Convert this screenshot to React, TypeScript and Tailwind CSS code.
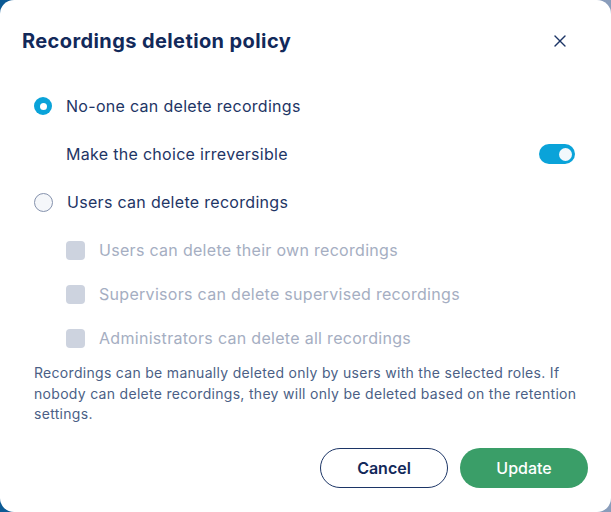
import { useState } from 'react';
import { X } from 'lucide-react';

const options = [
  'Users can delete their own recordings',
  'Supervisors can delete supervised recordings',
  'Administrators can delete all recordings',
];

export default function App() {
  const [mode, setMode] = useState<'none' | 'users'>('none');
  const [irreversible, setIrreversible] = useState(true);

  return (
    <div className="h-[512px] w-[611px] bg-gradient-to-r from-[#0b5a94] to-[#8a9dbb] font-['Inter',sans-serif]">
      <div className="flex h-full flex-col rounded-[14px] bg-white">
        <div className="flex items-center justify-between pl-[22px] pr-[41px] pt-[26px]">
          <h2 className="text-[20px] font-bold tracking-[0.4px] text-[#12295a]">Recordings deletion policy</h2>
          <button className="text-[#1c3566]">
            <X className="h-[20px] w-[20px]" strokeWidth={1.6} />
          </button>
        </div>

        <div className="mt-[38px] flex flex-col pl-[34px] pr-[24px] tracking-[0.3px]">
          <label className="flex h-[24px] items-center gap-[14px]" onClick={() => setMode('none')}>
            <span
              className={`flex h-[18px] w-[18px] items-center justify-center rounded-full ${
                mode === 'none' ? 'bg-[#0aa3d9]' : 'border border-[#8592ad] bg-[#f5f7fa]'
              }`}
            >
              {mode === 'none' && <span className="h-[7px] w-[7px] rounded-full bg-white" />}
            </span>
            <span className="text-[16px] text-[#1e3565]">No-one can delete recordings</span>
          </label>

          <div className="mt-[24px] flex h-[24px] items-center justify-between pl-[32px] pr-[12px]">
            <span className="text-[16px] text-[#1e3565]">Make the choice irreversible</span>
            <button
              onClick={() => setIrreversible(!irreversible)}
              className={`flex h-[20px] w-[36px] items-center rounded-full px-[3px] ${
                irreversible ? 'justify-end bg-[#0aa3d9]' : 'justify-start bg-[#c9d0dd]'
              }`}
            >
              <span className="h-[13px] w-[13px] rounded-full bg-[#f2f8fc]" />
            </button>
          </div>

          <label className="mt-[24px] flex h-[24px] items-center gap-[14px]" onClick={() => setMode('users')}>
            <span
              className={`flex h-[19px] w-[19px] items-center justify-center rounded-full ${
                mode === 'users' ? 'bg-[#0aa3d9]' : 'border border-[#8592ad] bg-[#f5f7fa]'
              }`}
            >
              {mode === 'users' && <span className="h-[7px] w-[7px] rounded-full bg-white" />}
            </span>
            <span className="text-[16px] text-[#1e3565]">Users can delete recordings</span>
          </label>

          <div className="mt-[24px] flex flex-col gap-[20px] pl-[32px]">
            {options.map((o) => (
              <div key={o} className="flex h-[24px] items-center gap-[14px]">
                <span className="h-[19px] w-[19px] rounded-[4px] bg-[#cdd3df]" />
                <span className="text-[16px] text-[#a5aec2]">{o}</span>
              </div>
            ))}
          </div>

          <p className="mt-[13px] text-[14px] leading-[20.5px] text-[#4b5f86]">
            Recordings can be manually deleted only by users with the selected roles. If nobody can delete
            recordings, they will only be deleted based on the retention settings.
          </p>
        </div>

        <div className="mt-auto mb-[24px] flex justify-end gap-[12px] pr-[23px]">
          <button className="h-[40px] w-[128px] rounded-full border border-[#1c3566] text-[16px] font-semibold text-[#12295a]">
            Cancel
          </button>
          <button className="h-[40px] w-[128px] rounded-full bg-[#3a9e68] text-[16px] font-medium text-white">
            Update
          </button>
        </div>
      </div>
    </div>
  );
}
